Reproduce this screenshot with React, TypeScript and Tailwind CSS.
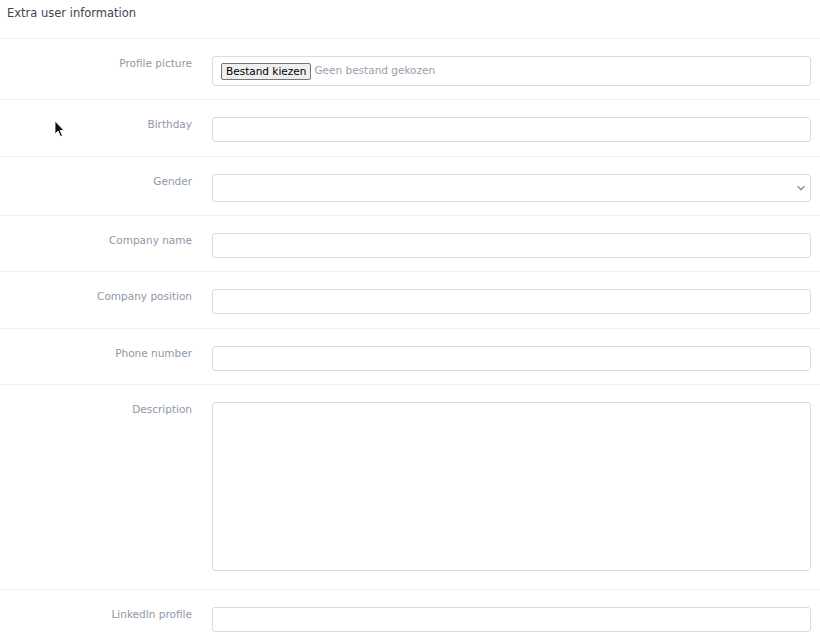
import React from 'react';

const font = { fontFamily: '"DejaVu Sans", "Noto Sans", sans-serif' };

function Row({ label, children, last, pb = 'pb-[14px]' }: { label: string; children: React.ReactNode; last?: boolean; pb?: string }) {
  return (
    <div className={`flex pt-[17px] ${pb} ${last ? '' : 'border-b border-[#eef0f3]'}`}>
      <div className="w-[192px] shrink-0 text-right text-[10.5px] leading-[14px] text-[#8e98a7]">{label}</div>
      <div className="flex-1 ml-[20px] mr-[9px]">{children}</div>
    </div>
  );
}

const inputCls = 'block w-full h-[25px] rounded-[3px] border border-[#d9dce1] bg-white outline-none';

export default function App() {
  return (
    <div className="relative min-h-screen bg-white text-[#3d4452]" style={font}>
      <div className="h-[39px] border-b border-[#eef0f3] px-[7px] pt-[5px] text-[11.5px] leading-[16px] text-[#3d4452]">
        Extra user information
      </div>

      <Row label="Profile picture" pb="pb-[13px]">
        <div className="flex items-center h-[30px] rounded-[3px] border border-[#d9dce1] px-[8px]">
          <button className="h-[17px] px-[4px] rounded-[2px] border border-[#767676] bg-[#efefef] text-[10.5px] leading-[15px] text-black">
            Bestand kiezen
          </button>
          <span className="ml-[3px] text-[10.5px] text-[#98a1ae]">Geen bestand gekozen</span>
        </div>
      </Row>

      <Row label="Birthday">
        <input className={inputCls} />
      </Row>

      <Row label="Gender" pb="pb-[13px]">
        <div className="relative">
          <select className={`${inputCls} h-[28px] appearance-none`} />
          <svg className="absolute right-[5px] top-[10px]" width="10" height="8" viewBox="0 0 10 8">
            <path d="M1.5 2.2 L5 5.6 L8.5 2.2" stroke="#8e98a7" strokeWidth="1.6" fill="none" />
          </svg>
        </div>
      </Row>

      <Row label="Company name" pb="pb-[13px]">
        <input className={inputCls} />
      </Row>

      <Row label="Company position">
        <input className={inputCls} />
      </Row>

      <Row label="Phone number" pb="pb-[13px]">
        <input className={inputCls} />
      </Row>

      <Row label="Description" pb="pb-[18px]">
        <textarea className="block w-full h-[169px] rounded-[3px] border border-[#d9dce1] bg-white outline-none resize-none" />
      </Row>

      <Row label="LinkedIn profile" last>
        <input className={inputCls} />
      </Row>

      <svg className="absolute left-[54px] top-[120px]" width="12" height="18" viewBox="0 0 12 18">
        <path d="M1 1 L1 14 L4 11 L6.5 16.5 L8.5 15.5 L6 10.5 L10 10.5 Z" fill="#111" stroke="#fff" strokeWidth="0.8" />
      </svg>
    </div>
  );
}
